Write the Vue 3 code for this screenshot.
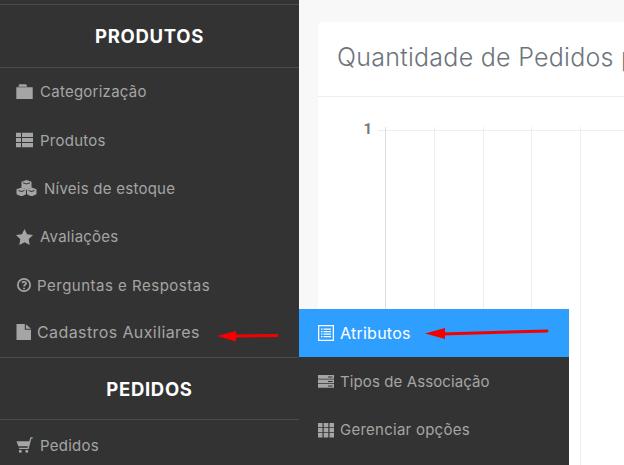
<template>
  <div class="page">
    <aside class="sidebar">
      <section v-for="group in groups" :key="group.title" class="group">
        <h2 class="group-title">{{ group.title }}</h2>
        <ul class="menu">
          <li v-for="item in group.items" :key="item.label" class="menu-item" :class="{ large: item.large, wide: item.wide }">
            <svg class="icon" :style="{ width: item.w + 'px' }" :viewBox="`0 0 ${item.w} 16`">
              <path :d="item.d" fill="currentColor" fill-rule="evenodd" />
            </svg>
            <span :style="{ marginLeft: item.gap + 'px' }">{{ item.label }}</span>
          </li>
        </ul>
      </section>
    </aside>

    <main class="content">
      <section class="card">
        <h1 class="card-title">Quantidade de Pedidos por</h1>
        <div class="chart">
          <span class="tick">1</span>
          <div class="plot">
            <i v-for="n in 6" :key="n"></i>
          </div>
        </div>
      </section>
    </main>

    <ul class="submenu">
      <li v-for="(item, i) in subItems" :key="item.label" class="sub-item" :class="{ active: i === 0, narrow: item.narrow }">
        <svg class="icon" viewBox="0 0 16 16">
          <path :d="item.d" fill="currentColor" fill-rule="evenodd" />
        </svg>
        <span>{{ item.label }}</span>
      </li>
    </ul>

    <!-- setas vermelhas desenhadas por cima do print -->
    <svg class="arrows" viewBox="0 0 624 465">
      <g fill="#f40000" stroke="#f40000" stroke-linecap="round">
        <path d="M236 336 L277 335.5" stroke-width="3" fill="none" />
        <path d="M217 336 L236 331 L236 341.5 Z" stroke-width="0" />
        <path d="M442 334 L547 331" stroke-width="3" fill="none" />
        <path d="M425 333.5 L445 328 L445 339 Z" stroke-width="0" />
      </g>
    </svg>
  </div>
</template>

<script setup>
const groups = [
  {
    title: 'PRODUTOS',
    items: [
      { label: 'Categorização', w: 17, gap: 7, d: 'M.3 3.300h16.400V15H.3z M3.300 .3h6.900l1 2.400H2.300z' },
      { label: 'Produtos', w: 17, gap: 7, d: 'M0 .7h5v4.300H0z M6 .7h11v4.300H6z M0 6h5v4H0z M6 6h11v4H6z M0 11h5v4.300H0z M6 11h11v4.300H6z' },
      { label: 'Níveis de estoque', w: 21, gap: 7, d: 'M10.500 0l5 1.800v5.700l-5 2.200-5-2.200V1.800z M10.500 3.500L7 2.200v1l3.500 1.300 3.500-1.300v-1z M5.500 7.400L10 9.200v5l-4.500 2.300L.5 14.200v-5z M5.500 11L2.500 9.900v1l3 1.100 3-1.100v-1z M15.500 7.400l5 1.800v5l-5 2.300-4.500-2.300v-5z M15.500 11l-3-1.100v1l3 1.100 3-1.100v-1z' },
      { label: 'Avaliações', w: 17, gap: 7, d: 'M8.500 0l2.600 5.300 5.900.8-4.300 4.100 1 5.800-5.200-2.800-5.200 2.800 1-5.800L0 6.100l5.900-.8z' },
      { label: 'Perguntas e Respostas', w: 15, gap: 6, wide: true, d: 'M8 1a7 7 0 1 1 0 14A7 7 0 0 1 8 1z M8 2.700a5.300 5.300 0 1 0 0 10.600A5.300 5.300 0 0 0 8 2.700z M7.200 10.700h1.700v1.600H7.200z M8.100 4c1.700 0 2.800 1 2.800 2.300 0 1-.6 1.500-1.200 1.900-.5.300-.8.500-.8 1.200H7.300c0-1.200.5-1.800 1.100-2.200.5-.3.800-.5.800-.9 0-.4-.4-.7-1-.7-.6 0-1 .3-1.300.9L5.500 5.300C6 4.500 6.900 4 8.100 4z' },
      { label: 'Cadastros Auxiliares', w: 15, gap: 6, large: true, d: 'M.5 0h8.300v5.700H15V16H.5z M9.900 .2L15 4.700H9.900z' },
    ],
  },
  {
    title: 'PEDIDOS',
    items: [
      { label: 'Pedidos', w: 17, gap: 7, d: 'M.5 4.300h12.800L14.400 .3h2.300v1.300h-1.300L12.600 12H3.300L2.800 10.800h8.700l.4-1.600H2.300z M4.300 12.700a1.500 1.500 0 1 1 0 3 1.500 1.500 0 0 1 0-3z M10.800 12.700a1.500 1.500 0 1 1 0 3 1.500 1.500 0 0 1 0-3z' },
    ],
  },
]

const subItems = [
  { label: 'Atributos', d: 'M0 0h16v16H0z M1.300 1.300v13.400h13.400V1.300z M3 3.500h1.500v1.300H3z M5.500 3.500H13v1.300H5.500z M3 6h1.500v1.300H3z M5.500 6H13v1.300H5.500z M3 8.500h1.500v1.300H3z M5.500 8.500H13v1.300H5.500z M3 11h1.500v1.300H3z M5.500 11H13v1.300H5.500z' },
  { label: 'Tipos de Associação', narrow: true, d: 'M0 2h16v3.800H0z M0 6.500h16v3.800H0z M0 11h16v3.800H0z M10 3.400h4.500v1H10z M10 7.900h4.500v1H10z M10 12.400h4.500v1H10z' },
  { label: 'Gerenciar opções', d: 'M0 1h4.500v4.300H0z M5.700 1h4.600v4.300H5.700z M11.500 1H16v4.300h-4.500z M0 6h4.500v4.300H0z M5.700 6h4.600v4.300H5.700z M11.500 6H16v4.300h-4.500z M0 11h4.500v4.500H0z M5.700 11h4.600v4.500H5.700z M11.500 11H16v4.500h-4.500z' },
]
</script>

<style>
html, body {
  margin: 0;
  background: #f8f8f8;
}
</style>

<style scoped>
.page {
  position: relative;
  display: flex;
  width: 624px;
  height: 465px;
  overflow: hidden;
  font-family: Inter, "Open Sans", sans-serif;
}

.sidebar {
  width: 299px;
  flex: none;
  height: 465px;
  padding-top: 4px;
  box-sizing: border-box;
  background: #333;
}

.group-title {
  margin: 0;
  height: 62px;
  border-top: 1px solid #4a4a4a;
  border-bottom: 1px solid #4a4a4a;
  color: #fff;
  font-size: 18.500px;
  font-weight: 700;
  letter-spacing: 0.7px;
  line-height: 63px;
  text-align: center;
}

.group:last-child .group-title {
  height: 61px;
  line-height: 62px;
}

.menu {
  margin: 0;
  padding: 0 0 0 16px;
  list-style: none;
}

.group:last-child .menu {
  padding-top: 3px;
}

.menu-item {
  display: flex;
  align-items: center;
  box-sizing: border-box;
  height: 48.400px;
  padding-bottom: 1px;
  color: #a5a5a5;
  font-size: 15px;
  letter-spacing: 0.25px;
}

.menu-item:last-child {
  height: 47px;
  padding-bottom: 2px;
}

.menu-item.wide {
  letter-spacing: 0.5px;
}

.menu-item.large {
  font-size: 16px;
  letter-spacing: 0.4px;
}

.icon {
  flex: none;
  height: 16px;
}

.content {
  flex: 1;
  padding: 22px 0 0 19px;
  min-width: 0;
}

.card {
  width: 400px;
  height: 460px;
  background: #fff;
  border-radius: 4px 0 0 0;
}

.card-title {
  margin: 0;
  height: 74px;
  padding-left: 19px;
  border-bottom: 1px solid #eee;
  color: #6c757d;
  font-size: 25px;
  font-weight: 300;
  letter-spacing: 0.27px;
  line-height: 71px;
  white-space: nowrap;
  overflow: hidden;
}

.chart {
  display: flex;
  padding-top: 23px;
}

.tick {
  width: 60px;
  padding-right: 6px;
  box-sizing: border-box;
  color: #777;
  font-family: Roboto, sans-serif;
  font-size: 15px;
  font-weight: 700;
  text-align: right;
  line-height: 18px;
}

.plot {
  display: flex;
  flex: 1;
  height: 340px;
  margin-top: 10px;
  border-top: 1px solid #eee;
}

.plot i {
  width: 48.750px;
  flex: none;
  box-sizing: border-box;
  margin-top: -4px;
  border-left: 1px solid #eee;
}

.plot i:first-child {
  margin-left: 7px;
  border-left-color: #ddd;
}

.submenu {
  position: absolute;
  left: 299px;
  top: 309px;
  width: 270px;
  height: 156px;
  margin: 0;
  padding: 0;
  list-style: none;
  background: #333;
}

.sub-item {
  display: flex;
  align-items: center;
  gap: 6px;
  height: 48.500px;
  padding-left: 19px;
  color: #a5a5a5;
  font-size: 15px;
  letter-spacing: 0.25px;
}

.sub-item.narrow {
  letter-spacing: 0.1px;
}

.sub-item.active {
  height: 48px;
  background: #2f9fff;
  color: #fff;
  font-size: 16px;
}

.arrows {
  position: absolute;
  inset: 0;
  width: 624px;
  height: 465px;
  pointer-events: none;
}
</style>
